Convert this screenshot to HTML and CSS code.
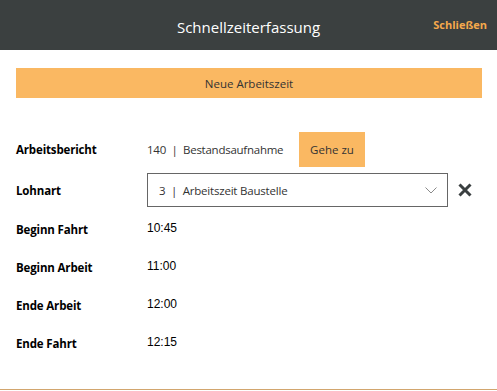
FILE: index.html
```html
<!DOCTYPE html>
<html lang="de">
<head>
    <meta charset="UTF-8">
    <meta name="viewport" content="width=device-width, initial-scale=1.0">
    <title>Schnellzeiterfassung</title>
    <link rel="stylesheet" href="styles.css">
</head>
<body>
    <div class="dialog">
        <header class="header">
            <span class="title">Schnellzeiterfassung</span>
            <button class="close-link">Schließen</button>
        </header>

        <div class="content">
            <button class="new-button">Neue Arbeitszeit</button>

            <div class="form">
                <div class="row row-report">
                    <span class="label">Arbeitsbericht</span>
                    <div class="value-group">
                        <span class="value">140&nbsp;&nbsp;|&nbsp;&nbsp;Bestandsaufnahme</span>
                        <button class="goto-button">Gehe zu</button>
                    </div>
                </div>

                <div class="row row-select">
                    <span class="label">Lohnart</span>
                    <div class="value-group">
                        <div class="select">
                            <span>3&nbsp;&nbsp;|&nbsp;&nbsp;Arbeitszeit Baustelle</span>
                            <svg class="chevron" width="12" height="7" viewBox="0 0 12 7">
                                <path d="M0.5 0.5 L6 6 L11.5 0.5" fill="none" stroke="#8a8a8a" stroke-width="1"/>
                            </svg>
                        </div>
                        <svg class="clear-icon" width="14" height="14" viewBox="0 0 14 14">
                            <path d="M1.5 1.5 L12.5 12.5 M12.5 1.5 L1.5 12.5" stroke="#3a3f40" stroke-width="3"/>
                        </svg>
                    </div>
                </div>

                <div class="row">
                    <span class="label">Beginn Fahrt</span>
                    <span class="time">10:45</span>
                </div>
                <div class="row">
                    <span class="label">Beginn Arbeit</span>
                    <span class="time">11:00</span>
                </div>
                <div class="row">
                    <span class="label">Ende Arbeit</span>
                    <span class="time">12:00</span>
                </div>
                <div class="row">
                    <span class="label">Ende Fahrt</span>
                    <span class="time">12:15</span>
                </div>
            </div>
        </div>
    </div>
</body>
</html>
```

FILE: styles.css
```css
/* Global Styles */
body {
    margin: 0;
    padding: 0;
    background: #fff;
    font-family: 'Open Sans', 'Noto Sans', sans-serif;
    color: #333;
}

.dialog {
    height: 389px;
    border-bottom: 1px solid #d2a66e;
    box-shadow: 0 1px 0 #8a8a8a;
    overflow: hidden;
}

/* Header */
.header {
    height: 50px;
    background-color: #3b4040;
    display: flex;
    align-items: center;
    justify-content: center;
    position: relative;
}

.title {
    color: #fff;
    font-size: 15px;
    margin-top: 4px;
}

.close-link {
    position: absolute;
    right: 10px;
    top: 17px;
    background: none;
    border: none;
    padding: 0;
    font-family: inherit;
    font-size: 11px;
    font-weight: bold;
    color: #f5a94c;
    cursor: pointer;
}

/* Content */
.content {
    padding: 18px 15px 0 16px;
}

.new-button {
    display: block;
    width: 100%;
    height: 30px;
    border: none;
    background-color: #fab862;
    color: #333;
    font-family: inherit;
    font-size: 11.5px;
    cursor: pointer;
}

.form {
    margin-top: 34px;
}

.row {
    display: flex;
    align-items: center;
    height: 38px;
}

.row-report {
    height: 35px;
    margin-bottom: 6px;
}

.row-select {
    height: 34px;
    margin-bottom: 3px;
}

.label {
    width: 131px;
    font-size: 11.5px;
    font-weight: bold;
    color: #000;
    letter-spacing: -0.15px;
}

.value-group {
    display: flex;
    align-items: center;
    height: 100%;
}

.value {
    font-size: 11.5px;
    color: #333;
    width: 152px;
    letter-spacing: -0.25px;
}

.goto-button {
    height: 35px;
    width: 66px;
    border: none;
    background-color: #fab862;
    color: #333;
    font-family: inherit;
    font-size: 11.5px;
    cursor: pointer;
}

.select {
    box-sizing: border-box;
    width: 301px;
    height: 34px;
    border: 1px solid #666;
    display: flex;
    align-items: center;
    justify-content: space-between;
    padding: 0 10px 0 11px;
    font-size: 11.5px;
    color: #333;
    letter-spacing: -0.2px;
}

.clear-icon {
    margin-left: 10px;
}

.time {
    font-family: 'Liberation Sans', Arial, sans-serif;
    font-size: 12px;
    color: #000;
    margin-top: -3px;
}
```
